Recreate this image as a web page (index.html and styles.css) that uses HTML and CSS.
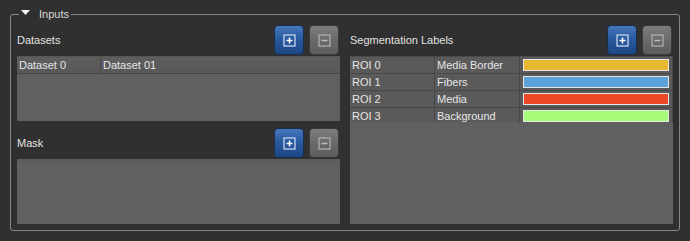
FILE: index.html
```html
<!DOCTYPE html>
<html>
<head>
<meta charset="utf-8">
<link rel="stylesheet" href="styles.css">
</head>
<body>
<div class="group">
  <div class="legend">
    <svg class="tri" width="9" height="5" viewBox="0 0 9 5"><path d="M0 0H9L4.5 5Z" fill="#f2f2f2"/></svg>
    <span class="legend-text">Inputs</span>
  </div>
  <div class="cols">
    <div class="col">
      <div class="hdr">
        <span class="label">Datasets</span>
        <div class="btns">
          <div class="btn add"><svg width="13" height="13" viewBox="0 0 13 13"><rect x="1" y="1" width="11" height="11" fill="none" stroke="#b9cdec" stroke-width="1.4"/><path d="M6.5 3.5V9.5M3.5 6.5H9.5" stroke="#ffffff" stroke-width="1.5"/></svg></div>
          <div class="btn del"><svg width="13" height="13" viewBox="0 0 13 13"><rect x="1" y="1" width="11" height="11" fill="none" stroke="#a9a9a9" stroke-width="1.4"/><path d="M3.5 6.5H9.5" stroke="#bdbdbd" stroke-width="1.5"/></svg></div>
        </div>
      </div>
      <div class="table ds">
        <div class="row head">
          <div class="cell c1">Dataset 0</div>
          <div class="cell c2">Dataset 01</div>
        </div>
      </div>
      <div class="hdr mask-hdr">
        <span class="label">Mask</span>
        <div class="btns">
          <div class="btn add"><svg width="13" height="13" viewBox="0 0 13 13"><rect x="1" y="1" width="11" height="11" fill="none" stroke="#b9cdec" stroke-width="1.4"/><path d="M6.5 3.5V9.5M3.5 6.5H9.5" stroke="#ffffff" stroke-width="1.5"/></svg></div>
          <div class="btn del"><svg width="13" height="13" viewBox="0 0 13 13"><rect x="1" y="1" width="11" height="11" fill="none" stroke="#a9a9a9" stroke-width="1.4"/><path d="M3.5 6.5H9.5" stroke="#bdbdbd" stroke-width="1.5"/></svg></div>
        </div>
      </div>
      <div class="table mask"></div>
    </div>
    <div class="col">
      <div class="hdr">
        <span class="label">Segmentation Labels</span>
        <div class="btns">
          <div class="btn add"><svg width="13" height="13" viewBox="0 0 13 13"><rect x="1" y="1" width="11" height="11" fill="none" stroke="#b9cdec" stroke-width="1.4"/><path d="M6.5 3.5V9.5M3.5 6.5H9.5" stroke="#ffffff" stroke-width="1.5"/></svg></div>
          <div class="btn del"><svg width="13" height="13" viewBox="0 0 13 13"><rect x="1" y="1" width="11" height="11" fill="none" stroke="#a9a9a9" stroke-width="1.4"/><path d="M3.5 6.5H9.5" stroke="#bdbdbd" stroke-width="1.5"/></svg></div>
        </div>
      </div>
      <div class="table seg">
        <div class="rows">
          <div class="row"><div class="cell c1">ROI 0</div><div class="cell c2">Media Border</div><div class="cell c3"><div class="swatch yellow"></div></div></div>
          <div class="row"><div class="cell c1">ROI 1</div><div class="cell c2">Fibers</div><div class="cell c3"><div class="swatch blue"></div></div></div>
          <div class="row"><div class="cell c1">ROI 2</div><div class="cell c2">Media</div><div class="cell c3"><div class="swatch red"></div></div></div>
          <div class="row"><div class="cell c1">ROI 3</div><div class="cell c2">Background</div><div class="cell c3"><div class="swatch green"></div></div></div>
        </div>
      </div>
    </div>
  </div>
</div>
</body>
</html>
```

FILE: styles.css
```css
html, body {
  margin: 0;
  padding: 0;
  background: #303030;
  width: 690px;
  height: 241px;
  overflow: hidden;
  font-family: "Liberation Sans", Arial, sans-serif;
  font-size: 11px;
  color: #e2e2e2;
}

.group {
  position: relative;
  box-sizing: border-box;
  margin: 14px 0 0 10px;
  width: 670px;
  height: 217px;
  border: 1px solid #868686;
  border-radius: 3px;
  padding: 10px 6px 6px 6px;
}

.legend {
  position: absolute;
  left: 8px;
  top: -7px;
  height: 13px;
  line-height: 13px;
  display: flex;
  align-items: flex-start;
  padding: 0 2px;
  background: #303030;
  color: #dadada;
}

.tri {
  margin-top: 2px;
  margin-right: 9px;
  display: block;
}

.cols {
  display: flex;
  gap: 10px;
  height: 100%;
}

.col {
  width: 323px;
  display: flex;
  flex-direction: column;
}

.hdr {
  height: 30px;
  display: flex;
  align-items: center;
  justify-content: space-between;
  padding-right: 1px;
  margin-bottom: 1px;
}

.mask-hdr {
  margin-top: 7px;
}

.label {
  line-height: 13px;
  color: #e2e2e2;
}

.btns {
  display: flex;
  gap: 5px;
}

.btn {
  box-sizing: border-box;
  width: 30px;
  height: 30px;
  border-radius: 4px;
  display: flex;
  align-items: center;
  justify-content: center;
}

.btn svg {
  display: block;
}

.btn.add {
  background: linear-gradient(#4677bb, #2a5aa0 45%, #1c4685);
  border: 1px solid #1a2d4a;
}

.btn.del {
  background: linear-gradient(#7c7c7c, #6a6a6a 50%, #5c5c5c);
  border: 1px solid #3a3a3a;
}

.table {
  background: #606060;
  overflow: hidden;
}

.table.ds, .table.mask {
  height: 65px;
}

.table.mask {
  background: linear-gradient(#5b5b5b, #616161 6px, #616161);
}

.table.seg {
  flex: 1;
}

.row {
  display: flex;
  height: 16px;
  border-bottom: 1px solid #474747;
  background: #5a5a5a;
}

.head {
  border-top: 1px solid #555555;
  background: linear-gradient(#5e5e5e, #585858);
}

.rows {
  height: 66px;
  overflow: hidden;
  border-top: 1px solid #4a4a4a;
  box-sizing: border-box;
}

.cell {
  box-sizing: border-box;
  height: 16px;
  line-height: 16px;
  padding-left: 2px;
  color: #e6e6e6;
  white-space: nowrap;
  border-right: 1px solid #474747;
}

.ds .c1 {
  width: 84px;
}

.ds .c2 {
  flex: 1;
  border-right: none;
}

.seg .c1 {
  width: 85px;
}

.seg .c2 {
  width: 85px;
}

.seg .c3 {
  flex: 1;
  padding: 2px 3px 2px 3px;
}

.swatch {
  box-sizing: border-box;
  height: 12px;
  border: 1px solid #e6e6e6;
}

.yellow { background: #e8b832; }
.blue { background: #5ba2da; }
.red { background: #ec4727; }
.green { background: #a9fc79; }
```
